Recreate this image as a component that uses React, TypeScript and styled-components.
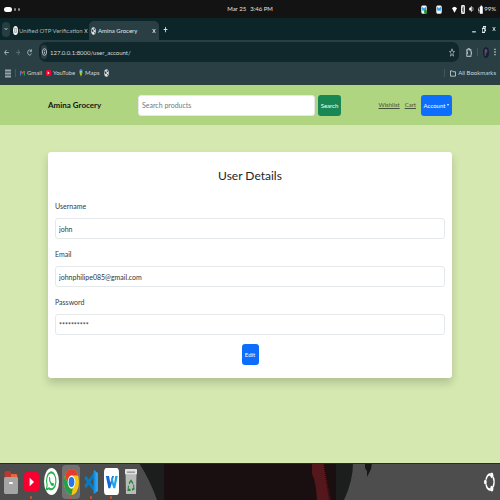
import React from "react";
import styled, { createGlobalStyle } from "styled-components";

const Global = createGlobalStyle`
  * { box-sizing: border-box; }
  body { margin: 0; background: #d4e8b0; }
  body, button, input { font-family: Lato, "Liberation Sans", sans-serif; }
  button { border: 0; margin: 0; padding: 0; background: none; color: inherit; cursor: pointer; }
  svg { display: block; flex: none; }
`;

const Screen = styled.div`
  display: flex;
  flex-direction: column;
  min-height: 100vh;
  font-size: 7px;
  line-height: 12px;
`;

const SystemBar = styled.header`
  display: grid;
  grid-template-columns: 1fr auto 1fr;
  align-items: center;
  height: 18px;
  padding: 0 4px;
  background: #131313;
  color: #e2e2e2;
  font-size: 6px;
`;
const Workspaces = styled.div`
  display: flex;
  align-items: center;
  gap: 2px;
`;
const Dot = styled.span<{ $active?: boolean }>`
  width: ${(p) => (p.$active ? 8 : 2)}px;
  height: ${(p) => (p.$active ? 5 : 3)}px;
  border-radius: 3px;
  background: ${(p) => (p.$active ? "#fff" : "#8a8a8a")};
`;
const Clock = styled.div`
  display: flex;
  gap: 4px;
`;
const Tray = styled.div`
  display: flex;
  align-items: center;
  justify-content: flex-end;
  gap: 4px;
`;
const TrayApps = styled.div`
  display: flex;
  gap: 9px;
  margin-right: 6px;
`;
const Battery = styled.span`
  display: flex;
  align-items: center;
  gap: 1px;
`;

const TabStrip = styled.div`
  display: flex;
  align-items: center;
  height: 22px;
  padding: 0 4px 0 2px;
  background: #0b2529;
  color: #9fb2b4;
  font-size: 6px;
`;
const TabMenu = styled.button`
  display: grid;
  place-items: center;
  width: 8px;
  height: 15px;
  border-radius: 4px;
  background: #263e42;
  color: #dde6e6;
`;
const Tab = styled.div<{ $active?: boolean }>`
  display: flex;
  align-items: center;
  align-self: flex-end;
  gap: ${(p) => (p.$active ? 2 : 1)}px;
  width: ${(p) => (p.$active ? 70 : 79)}px;
  height: 19px;
  padding: ${(p) => (p.$active ? "0 3px 0 2px" : "0 2px 0 3px")};
  border-radius: 5px 5px 0 0;
  white-space: nowrap;
  background: ${(p) => (p.$active ? "#293f44" : "transparent")};
  color: ${(p) => (p.$active ? "#e0e8e9" : "#a8b8ba")};
`;
const TabTitle = styled.span`
  flex: 1;
`;
const IconButton = styled.button`
  display: grid;
  place-items: center;
`;
const NewTab = styled(IconButton)`
  margin-left: 4px;
  color: #dde6e6;
`;
const WindowControls = styled.div`
  display: flex;
  gap: 6px;
  margin-left: auto;
  color: #e4eaea;
`;

const Toolbar = styled.div`
  display: flex;
  align-items: center;
  gap: 7px;
  height: 24px;
  padding: 0 4px;
  background: #293f44;
  color: #c6d2d3;
`;
const AddressBar = styled.div`
  display: flex;
  flex: 1;
  align-items: center;
  gap: 3px;
  min-width: 0;
  height: 20px;
  padding: 0 4px 0 2px;
  border-radius: 7px;
  background: #10282c;
`;
const SiteInfo = styled(IconButton)`
  width: 6px;
  height: 14px;
  border-radius: 3px;
  background: #293f44;
`;
const Address = styled.input`
  flex: 1;
  min-width: 0;
  padding: 0;
  border: 0;
  outline: 0;
  background: transparent;
  color: #d3dcdd;
  font-size: 6px;
`;
const ToolbarEnd = styled.div`
  display: flex;
  align-items: center;
  gap: 5px;
`;
const Rule = styled.span`
  width: 1px;
  height: 8px;
  background: #43575b;
`;

const Bookmarks = styled.nav`
  display: flex;
  align-items: center;
  gap: 4px;
  height: 21px;
  padding: 0 4px 3px 5px;
  background: #293f44;
  color: #ccd6d7;
  font-size: 6px;
`;
const Bookmark = styled.a<{ $end?: boolean }>`
  display: flex;
  align-items: center;
  gap: 2px;
  margin-left: ${(p) => (p.$end ? "auto" : "0")};
  color: inherit;
  text-decoration: none;
  white-space: nowrap;
`;

const StoreBar = styled.header`
  display: grid;
  grid-template-columns: 83fr 203fr 104fr;
  align-items: center;
  gap: 7px;
  height: 40px;
  padding: 0 48px;
  background: #b0d580;
`;
const Brand = styled.a`
  color: #101510;
  font-size: 8px;
  font-weight: 700;
  text-decoration: none;
  white-space: nowrap;
`;
const SearchForm = styled.form`
  display: flex;
  gap: 3px;
`;
const Field = styled.input`
  width: 100%;
  min-width: 0;
  height: 21px;
  padding: 0 3px;
  border: 1px solid #e6e9eb;
  border-radius: 3px;
  outline: 0;
  background: #fff;
  color: #2e3338;
  font-size: 7px;
  &::placeholder { color: #73787d; opacity: 1; }
`;
const Button = styled.button<{ $tone: "green" | "blue"; $width: number }>`
  display: flex;
  flex: none;
  align-items: center;
  justify-content: center;
  gap: 2px;
  width: ${(p) => p.$width}px;
  height: 21px;
  border-radius: 3px;
  background: ${(p) => (p.$tone === "green" ? "#198754" : "#0d6efd")};
  color: #fff;
  font-size: 6px;
`;
const Caret = styled.span`
  border: 1px solid transparent;
  border-top: 2px solid currentColor;
  border-bottom: 0;
`;
const StoreLinks = styled.nav`
  display: flex;
  align-items: center;
  justify-content: flex-end;
  gap: 5px;
  font-size: 6px;
`;
const StoreLink = styled.a`
  color: #46543a;
  text-decoration: underline;
`;

const Page = styled.main`
  flex: 1;
  padding: 27px 48px;
  background: #d4e8b0;
`;
const Card = styled.form`
  display: flex;
  flex-direction: column;
  padding: 12px 7px 13px;
  border-radius: 3px;
  background: #fff;
  box-shadow: 0 5px 8px rgba(0, 0, 0, 0.17);
`;
const Title = styled.h1`
  margin: 0 0 12px;
  color: #212529;
  font-size: 12px;
  font-weight: 400;
  line-height: 24px;
  text-align: center;
`;
const Group = styled.div`
  display: flex;
  flex-direction: column;
  gap: 6px;
  margin-bottom: 9px;
`;
const Label = styled.label`
  color: #343a40;
`;
const Actions = styled.div`
  display: flex;
  justify-content: center;
`;

const Dock = styled.footer`
  position: relative;
  display: flex;
  align-items: center;
  height: 37px;
  padding: 0 5px 0 1px;
  background: #4d4d4d;
  overflow: hidden;
`;
const Wallpaper = styled.svg`
  position: absolute;
  inset: 0;
  width: 100%;
  height: 100%;
`;
const DockApp = styled.button<{ $active?: boolean }>`
  position: relative;
  display: grid;
  place-items: center;
  width: 20px;
  height: 34px;
  &::before {
    content: "";
    position: absolute;
    inset: 0 1px;
    border-radius: 4px;
    background: ${(p) => (p.$active ? "#727272" : "transparent")};
  }
  svg { position: relative; }
`;
const Running = styled.span`
  position: absolute;
  bottom: 0;
  width: 2px;
  height: 3px;
  border-radius: 1px;
  background: #d9512c;
`;
const ShowApps = styled(DockApp)`
  width: 12px;
  margin-left: auto;
`;

type ArtProps = { w: number; h: number; box?: string; children: React.ReactNode };
const Art = ({ w, h, box = "0 0 24 24", children }: ArtProps) => (
  <svg width={w} height={h} viewBox={box} preserveAspectRatio="none" fill="none" stroke="currentColor" strokeWidth="3" aria-hidden="true">
    {children}
  </svg>
);

const Globe = () => (
  <Art w={5} h={8}>
    <circle cx="12" cy="12" r="11" fill="#dce3e4" stroke="none" />
    <path d="M3 7l7 1 3 5-4 3-5-4zM14 2l6 5-4 3-3-3zM14 16l5-1-3 6z" fill="#293f44" stroke="none" />
  </Art>
);
const Close = () => (
  <Art w={4} h={6}><path d="M4 4l16 16M20 4L4 20" strokeWidth="4" /></Art>
);
const TrayApp = ({ badge }: { badge?: boolean }) => (
  <Art w={6} h={9}>
    <rect x="1" y="1" width="22" height="22" rx="5" fill="#f4f8fb" stroke="none" />
    <path d="M3 6h5l4 4 4-4h5l-4 11-5-4-5 4z" fill="#239be8" stroke="none" />
    {badge && <circle cx="18" cy="18" r="6" fill="#1e9a28" stroke="none" />}
  </Art>
);

const dockApps = [
  {
    name: "Files", w: 14, h: 24, running: false,
    art: <><path d="M1 4q0-3 3-3h6l3 3h8q2 0 2 3v4H1z" fill="#bd382d" stroke="none" /><path d="M12 4h9q2 0 2 3v3H12z" fill="#e0683a" stroke="none" /><rect x="0" y="7" width="24" height="17" rx="2" fill="#a5a5a5" stroke="none" /><path d="M9 13h6" stroke="#fff" strokeWidth="2" /></>,
  },
  {
    name: "YouTube", w: 15, h: 20, running: true,
    art: <><rect width="24" height="24" rx="5" fill="#f7002f" stroke="none" /><path d="M9 7l7 5-7 5z" fill="#fff" stroke="none" /></>,
  },
  {
    name: "WhatsApp", w: 15, h: 27, running: false,
    art: <><circle cx="12" cy="12" r="12" fill="#fff" stroke="none" /><path d="M4 19l1-4A7.500 7.500 0 1 1 8 18z" stroke="#23b34b" strokeWidth="1.800" /><path d="M8 8q1-1 2 1v2q2 3 4 2 2 0 2 2-2 2-5 0-4-3-3-7z" fill="#23b34b" stroke="none" /></>,
  },
  {
    name: "Chrome", w: 15, h: 26, running: true, active: true,
    art: <><circle cx="12" cy="12" r="12" fill="#f9c513" stroke="none" /><path d="M1.600 6A12 12 0 0 1 22.400 6H12a6 6 0 0 0-5 9z" fill="#e53b2e" stroke="none" /><path d="M1.600 6l5.200 9a6 6 0 0 0 7.200 2.700L12 24A12 12 0 0 1 1.600 6z" fill="#239d50" stroke="none" /><circle cx="12" cy="12" r="6" fill="#fff" stroke="none" /><circle cx="12" cy="12" r="4.600" fill="#2877e8" stroke="none" /></>,
  },
  {
    name: "Visual Studio Code", w: 14, h: 24, running: true,
    art: <><path d="M17 0l7 3v18l-7 3z" fill="#2ba5ef" stroke="none" /><path d="M2 7l16 13M2 17L18 4" stroke="#087bc2" strokeWidth="4" /><path d="M18 1v22" stroke="#1592df" strokeWidth="3" /></>,
  },
  {
    name: "WPS Office", w: 15, h: 27, running: true,
    art: <><rect width="24" height="24" rx="4" fill="#fff" stroke="none" /><path d="M3 7h5l2 6 3-6h3l-6 11H7z" fill="#1468d8" stroke="none" /><path d="M13 7l3 7 2-7h4l-4 11h-3l-4-7z" fill="#20a3ed" stroke="none" /></>,
  },
  {
    name: "Trash", w: 12, h: 25, running: false,
    art: <><path d="M1 3h22l-1 21H2z" fill="#b9bbb9" stroke="none" /><rect width="24" height="5" rx="1" fill="#e1e1df" stroke="none" /><path d="M4 3h16" stroke="#777" strokeWidth="1" /><path d="M8 14l4-3 4 3M17 15l1 4-4 1M11 20H6l1-4" stroke="#26853b" strokeWidth="2" /></>,
  },
];

const fields = [
  { id: "username", label: "Username", value: "john" },
  { id: "email", label: "Email", value: "johnphilipe085@gmail.com" },
  { id: "password", label: "Password", value: "**********" },
];

export default function App() {
  return (
    <Screen>
      <Global />
      <SystemBar>
        <Workspaces><Dot $active /><Dot /><Dot /></Workspaces>
        <Clock><span>Mar 25</span><span>3:46 PM</span></Clock>
        <Tray>
          <TrayApps><TrayApp badge /><TrayApp /></TrayApps>
          <Art w={5} h={7}><path d="M0 8Q12-3 24 8L12 23z" fill="#fff" stroke="none" /></Art>
          <Art w={4} h={9}><rect width="24" height="24" rx="6" fill="#eee" stroke="none" /><path d="M6 8l12 8-6 4V4l6 4-12 8" stroke="#333" strokeWidth="2" /></Art>
          <Art w={5} h={8}><path d="M1 8h5l7-6v20l-7-6H1z" fill="#fff" stroke="none" /><path d="M17 6q6 6 0 12" stroke="#aaa" /></Art>
          <Battery>
            <Art w={5} h={9}><path d="M9 4h4V1h6v3h4v19H9z" fill="#fff" stroke="none" /><path d="M6 6l-5 8h5l-2 7" stroke="#ddd" /></Art>
            99%
          </Battery>
        </Tray>
      </SystemBar>

      <TabStrip>
        <TabMenu aria-label="Search tabs"><Art w={4} h={4}><path d="M4 7l8 9 8-9" strokeWidth="5" /></Art></TabMenu>
        <Tab>
          <Art w={5} h={9}><circle cx="12" cy="12" r="12" fill="#f4f4f4" stroke="none" /><path d="M8 6h8v11H8z" stroke="#777" strokeWidth="2" /></Art>
          <TabTitle>Unified OTP Verification</TabTitle>
          <IconButton aria-label="Close Unified OTP Verification"><Close /></IconButton>
        </Tab>
        <Tab $active>
          <Globe />
          <TabTitle>Amina Grocery</TabTitle>
          <IconButton aria-label="Close Amina Grocery"><Close /></IconButton>
        </Tab>
        <NewTab aria-label="New tab"><Art w={5} h={7}><path d="M12 3v18M3 12h18" strokeWidth="4" /></Art></NewTab>
        <WindowControls>
          <IconButton aria-label="Minimize"><Art w={4} h={7}><path d="M1 20h22" strokeWidth="4" /></Art></IconButton>
          <IconButton aria-label="Restore"><Art w={4} h={7}><path d="M2 8h14v14H2zM8 8V2h14v14h-6" strokeWidth="4" /></Art></IconButton>
          <IconButton aria-label="Close window"><Close /></IconButton>
        </WindowControls>
      </TabStrip>

      <Toolbar>
        <IconButton aria-label="Back"><Art w={5} h={7}><path d="M23 12H3M12 3l-9 9 9 9" /></Art></IconButton>
        <IconButton aria-label="Forward"><Art w={4} h={7}><path d="M1 12h20M12 3l9 9-9 9" stroke="#71858a" /></Art></IconButton>
        <IconButton aria-label="Reload"><Art w={5} h={7}><path d="M20 7a9 9 0 1 0 1 8M21 1v8h-8" /></Art></IconButton>
        <AddressBar>
          <SiteInfo aria-label="Site information"><Art w={5} h={8}><circle cx="12" cy="12" r="10" /><path d="M12 11v6M12 6v2" /></Art></SiteInfo>
          <Address aria-label="Address" defaultValue="127.0.0.1:8000/user_account/" />
          <IconButton aria-label="Bookmark this page"><Art w={6} h={9}><path d="M12 2l3 7h7l-6 5 2 8-6-5-6 5 2-8-6-5h7z" strokeWidth="2" /></Art></IconButton>
        </AddressBar>
        <ToolbarEnd>
          <IconButton aria-label="Extensions"><Art w={6} h={9}><path d="M3 5h5V2h6v3h6v6h2v5h-2v6H3v-7h3v-4H3z" /></Art></IconButton>
          <Rule />
          <IconButton aria-label="Profile"><Art w={6} h={11}><circle cx="12" cy="12" r="12" fill="#14203a" stroke="none" /><path d="M9 19V6h5q3 4-2 7" stroke="#a96e76" strokeWidth="2" /></Art></IconButton>
          <IconButton aria-label="Menu"><Art w={2} h={8} box="0 0 6 24"><path d="M3 2v4M3 10v4M3 18v4" strokeWidth="4" /></Art></IconButton>
        </ToolbarEnd>
      </Toolbar>

      <Bookmarks aria-label="Bookmarks">
        <IconButton aria-label="Apps"><Art w={6} h={9}><path d="M2 2h4v4H2zM10 2h4v4h-4zM18 2h4v4h-4zM2 10h4v4H2zM10 10h4v4h-4zM18 10h4v4h-4zM2 18h4v4H2zM10 18h4v4h-4zM18 18h4v4h-4z" strokeWidth="2" /></Art></IconButton>
        <Rule />
        <Bookmark href="#gmail">
          <Art w={5} h={6}><path d="M3 22V4" stroke="#4285f4" strokeWidth="5" /><path d="M21 22V4" stroke="#34a853" strokeWidth="5" /><path d="M3 4l9 9 9-9" stroke="#ea4335" strokeWidth="6" /></Art>
          Gmail
        </Bookmark>
        <Bookmark href="#youtube">
          <Art w={5} h={6}><rect width="24" height="24" rx="5" fill="#f7002f" stroke="none" /><path d="M8 6l9 6-9 6z" fill="#fff" stroke="none" /></Art>
          YouTube
        </Bookmark>
        <Bookmark href="#maps">
          <Art w={4} h={8}><path d="M12 24C3 14 2 11 2 8a10 8 0 0 1 20 0c0 5-5 9-10 16z" fill="#34a853" stroke="none" /><path d="M2 8a10 8 0 0 1 13-7L5 14Q2 11 2 8z" fill="#4285f4" stroke="none" /><path d="M5 14l7-6 3 8-3 4z" fill="#fbbc04" stroke="none" /><circle cx="12" cy="8" r="3" fill="#fff" stroke="none" /></Art>
          Maps
        </Bookmark>
        <Bookmark href="#site" aria-label="Saved site"><Globe /></Bookmark>
        <Bookmark $end href="#all">
          <Rule />
          <Art w={9} h={7} box="0 0 36 24"><path d="M14 3h7l3 3h10v15H14z" /></Art>
          All Bookmarks
        </Bookmark>
      </Bookmarks>

      <StoreBar>
        <Brand href="#home">Amina Grocery</Brand>
        <SearchForm onSubmit={(e) => e.preventDefault()}>
          <Field type="search" aria-label="Search products" placeholder="Search products" />
          <Button type="submit" $tone="green" $width={23}>Search</Button>
        </SearchForm>
        <StoreLinks>
          <StoreLink href="#wishlist">Wishlist</StoreLink>
          <StoreLink href="#cart">Cart</StoreLink>
          <Button type="button" aria-haspopup="menu" $tone="blue" $width={31}>Account<Caret /></Button>
        </StoreLinks>
      </StoreBar>

      <Page>
        <Card onSubmit={(e) => e.preventDefault()}>
          <Title>User Details</Title>
          {fields.map((f) => (
            <Group key={f.id}>
              <Label htmlFor={f.id}>{f.label}</Label>
              <Field id={f.id} defaultValue={f.value} />
            </Group>
          ))}
          <Actions><Button type="submit" $tone="blue" $width={17}>Edit</Button></Actions>
        </Card>
      </Page>

      <Dock>
        <Wallpaper viewBox="0 0 500 37" preserveAspectRatio="none" aria-hidden="true">
          <path d="M139 0H353Q353 18 344 37H157Q150 17 139 0z" fill="#1c1e1e" />
          <path d="M164 0H336V37H164z" fill="#1a0f10" />
          <path d="M312 0h12l7 37h-14q-1-18-5-26z" fill="#54171b" />
          <path d="M324 0l6 37" stroke="#160b0c" strokeWidth="2" strokeDasharray="1 1" />
          <path d="M365 0h7l-1 6-4 8v-6l-2-3z" fill="#171717" />
          <path d="M0 0H500" stroke="#282b26" strokeWidth="2" />
        </Wallpaper>
        {dockApps.map((a) => (
          <DockApp key={a.name} aria-label={a.name} $active={a.active}>
            <Art w={a.w} h={a.h}>{a.art}</Art>
            {a.running && <Running />}
          </DockApp>
        ))}
        <ShowApps aria-label="Show apps">
          <Art w={11} h={20}>
            <path d="M19.900 6.200A9 9 0 0 1 19.900 17.800M14.600 20.900A9 9 0 0 1 4.500 15M4.500 9A9 9 0 0 1 14.600 3.100" stroke="#fff" strokeWidth="3" />
            <circle cx="3" cy="12" r="3" fill="#fff" stroke="none" />
            <circle cx="17" cy="4" r="3.500" fill="#fff" stroke="none" />
            <circle cx="17" cy="20" r="3.500" fill="#fff" stroke="none" />
          </Art>
        </ShowApps>
      </Dock>
    </Screen>
  );
}
